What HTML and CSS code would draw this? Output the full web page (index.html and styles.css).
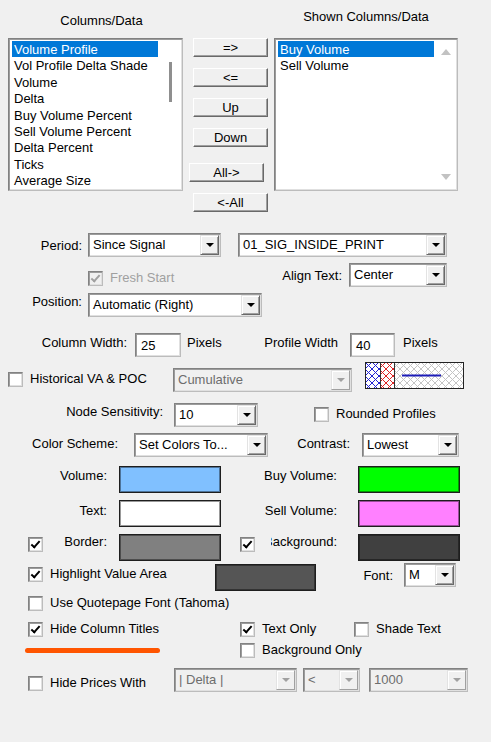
FILE: index.html
```html
<!DOCTYPE html>
<html lang="en">
<head>
  <meta charset="UTF-8" />
  <title>Volume Profile - Column Settings</title>
  <link rel="stylesheet" href="styles.css">
</head>
<body>
  <div class="dlg">
    <!-- column pickers -->
    <div class="lists">
      <div class="pane pane-src">
        <div class="pane-title">Columns/Data</div>
        <div class="listbox">
          <ul class="items">
            <li class="sel">Volume Profile</li>
            <li>Vol Profile Delta Shade</li>
            <li>Volume</li>
            <li>Delta</li>
            <li>Buy Volume Percent</li>
            <li>Sell Volume Percent</li>
            <li>Delta Percent</li>
            <li>Ticks</li>
            <li>Average Size</li>
          </ul>
          <div class="vbar"><span class="thumb"></span></div>
        </div>
      </div>
      <div class="movers">
        <button class="btn">=&gt;</button>
        <button class="btn">&lt;=</button>
        <button class="btn">Up</button>
        <button class="btn">Down</button>
        <button class="btn all-in">All-&gt;</button>
        <button class="btn">&lt;-All</button>
      </div>
      <div class="pane pane-dst">
        <div class="pane-title">Shown Columns/Data</div>
        <div class="listbox">
          <ul class="items">
            <li class="sel">Buy Volume</li>
            <li>Sell Volume</li>
          </ul>
          <div class="vbar"><span class="arr up"></span><span class="arr down"></span></div>
        </div>
      </div>
    </div>

    <div class="row period">
      <span class="lab r period-lab">Period:</span>
      <div class="combo period-box"><span class="val">Since Signal</span><span class="drop"></span></div>
      <div class="combo signal-box"><span class="val">01_SIG_INSIDE_PRINT</span><span class="drop"></span></div>
    </div>

    <div class="row align">
      <label class="check off fresh-chk"><span class="chk on"></span>Fresh Start</label>
      <span class="lab r align-lab">Align Text:</span>
      <div class="combo align-box"><span class="val">Center</span><span class="drop"></span></div>
    </div>

    <div class="row position">
      <span class="lab r pos-lab">Position:</span>
      <div class="combo pos-box"><span class="val">Automatic (Right)</span><span class="drop"></span></div>
    </div>

    <div class="row widths">
      <span class="lab r colw-lab">Column Width:</span>
      <span class="edit colw-box">25</span>
      <span class="lab colw-unit">Pixels</span>
      <span class="lab r profw-lab">Profile Width</span>
      <span class="edit profw-box">40</span>
      <span class="lab">Pixels</span>
    </div>

    <div class="row hist">
      <label class="check hist-chk"><span class="chk"></span>Historical VA &amp; POC</label>
      <div class="combo off cum-box"><span class="val">Cumulative</span><span class="drop"></span></div>
      <svg class="hatch" width="99" height="27" viewBox="0 0 99 27">
        <defs>
          <pattern id="hatch-blue" width="7" height="7" patternUnits="userSpaceOnUse">
            <path d="M0 0L7 7M7 0L0 7" stroke="#2424d4" stroke-width="1" />
          </pattern>
          <pattern id="hatch-red" width="7" height="7" patternUnits="userSpaceOnUse">
            <path d="M0 0L7 7M7 0L0 7" stroke="#e02424" stroke-width="1" />
          </pattern>
          <pattern id="hatch-grey" width="7" height="7" patternUnits="userSpaceOnUse">
            <path d="M0 0L7 7M7 0L0 7" stroke="#c4c4c4" stroke-width="1" />
          </pattern>
        </defs>
        <rect width="99" height="27" fill="#fff" />
        <rect x="1" y="1" width="15" height="25" fill="url(#hatch-blue)" />
        <rect x="16" y="1" width="13" height="25" fill="url(#hatch-red)" />
        <rect x="29" y="1" width="69" height="25" fill="url(#hatch-grey)" />
        <path d="M15.5 1V26M29.5 1V26" stroke="#333" />
        <path d="M37 13.5H76" stroke="#1c1cb8" stroke-width="2" />
        <rect x="0.5" y="0.5" width="98" height="26" fill="none" stroke="#222" />
      </svg>
    </div>

    <div class="row node">
      <span class="lab r node-lab">Node Sensitivity:</span>
      <div class="combo node-box"><span class="val">10</span><span class="drop"></span></div>
      <label class="check round-chk"><span class="chk"></span>Rounded Profiles</label>
    </div>

    <div class="row scheme">
      <span class="lab r scheme-lab">Color Scheme:</span>
      <div class="combo scheme-box"><span class="val">Set Colors To...</span><span class="drop"></span></div>
      <span class="lab r contrast-lab">Contrast:</span>
      <div class="combo contrast-box"><span class="val">Lowest</span><span class="drop"></span></div>
    </div>

    <!-- colour swatches -->
    <div class="row swatches">
      <span class="lab r left-lab">Volume:</span>
      <span class="swatch c-volume"></span>
      <span class="lab r right-lab">Buy Volume:</span>
      <span class="swatch c-buy"></span>
    </div>

    <div class="row swatches text-row">
      <span class="lab r left-lab">Text:</span>
      <span class="swatch c-text"></span>
      <span class="lab r right-lab">Sell Volume:</span>
      <span class="swatch c-sell"></span>
    </div>

    <div class="row swatches border-row">
      <span class="chk on border-chk"></span>
      <span class="lab r border-lab">Border:</span>
      <span class="swatch c-border"></span>
      <span class="chk on bg-chk"></span>
      <span class="lab bg-lab">Background:</span>
      <span class="swatch c-back"></span>
    </div>

    <div class="row highlight">
      <label class="check hl-chk"><span class="chk on"></span>Highlight Value Area</label>
      <span class="swatch c-highlight"></span>
      <span class="lab r font-lab">Font:</span>
      <div class="combo font-box"><span class="val">M</span><span class="drop"></span></div>
    </div>

    <div class="row quote">
      <label class="check"><span class="chk"></span>Use Quotepage Font (Tahoma)</label>
    </div>

    <div class="row titles">
      <label class="check titles-chk"><span class="chk on"></span>Hide Column Titles</label>
      <label class="check textonly-chk"><span class="chk on"></span>Text Only</label>
      <label class="check"><span class="chk"></span>Shade Text</label>
    </div>

    <div class="row bgonly">
      <span class="mark"></span>
      <label class="check bgonly-chk"><span class="chk"></span>Background Only</label>
    </div>

    <div class="row prices">
      <label class="check prices-chk"><span class="chk"></span>Hide Prices With</label>
      <div class="combo off delta-box"><span class="val">| Delta |</span><span class="drop"></span></div>
      <div class="combo off op-box"><span class="val">&lt;</span><span class="drop"></span></div>
      <div class="combo off qty-box"><span class="val">1000</span><span class="drop"></span></div>
    </div>
  </div>
</body>
</html>
```

FILE: styles.css
```css
body {
  margin: 0;
  background: #f0f0f0;
  color: #000;
  font-family: "Liberation Sans", Arial, sans-serif;
  font-size: 13px;
}
.dlg {
  width: 491px;
  height: 742px;
  overflow: hidden;
}

/* sunken frame shared by lists, combos, edits, checkboxes */
.listbox,
.combo,
.edit,
.chk {
  box-sizing: border-box;
  border: 1px solid;
  border-color: #828282 #bcbcbc #bcbcbc #828282;
  box-shadow: inset 1px 1px #9c9c9c, inset -1px -1px #e0e0e0;
  background: #fff;
}

/* ---- list pickers ---- */
.lists {
  display: flex;
  height: 213px;
}
.pane {
  display: flex;
  flex-direction: column;
}
.pane-src {
  margin-left: 8px;
  width: 175px;
}
.pane-dst {
  margin-left: 6px;
  width: 184px;
}
.pane-title {
  height: 38px;
  box-sizing: border-box;
  line-height: 16px;
  text-align: center;
}
.pane-src .pane-title {
  padding: 13px 0 0 12px;
}
.pane-dst .pane-title {
  padding-top: 9px;
}
.listbox {
  height: 153px;
  display: flex;
  padding: 2px 0 0 3px;
}
.items {
  list-style: none;
  margin: 0;
  padding: 0;
  width: 146px;
  flex-shrink: 0;
}
.pane-dst .items {
  width: 156px;
}
.items li {
  height: 16.4px;
  line-height: 17px;
  padding-left: 2px;
  white-space: nowrap;
}
.items li.sel {
  background: #0078d7;
  color: #fff;
}
.vbar {
  flex: 1;
  display: flex;
  flex-direction: column;
  align-items: center;
}
.thumb {
  width: 3px;
  height: 40px;
  margin-top: 21px;
  background: #8f8f8f;
}
.arr {
  width: 0;
  height: 0;
  border-left: 5px solid transparent;
  border-right: 5px solid transparent;
}
.arr.up {
  margin-top: 8px;
  border-bottom: 6px solid #c2c2c2;
}
.arr.down {
  margin: auto 0 10px;
  border-top: 6px solid #c2c2c2;
}

.movers {
  display: flex;
  flex-direction: column;
  align-items: flex-start;
  margin-left: 6px;
  width: 79px;
  padding-top: 38px;
  box-sizing: border-box;
}
.btn {
  width: 75px;
  height: 19px;
  margin: 11px 0 0 4px;
  padding: 0;
  font: inherit;
  line-height: 15px;
  color: #000;
  background: #f0f0f0;
  border: 1px solid;
  border-color: #fff #696969 #696969 #fff;
  box-shadow: inset -1px -1px #a0a0a0;
}
.btn:first-child {
  margin-top: 0;
}
.btn.all-in {
  margin: 16px 0 0 0;
}

/* ---- form rows ---- */
.row {
  display: flex;
  align-items: flex-start;
}
.row > * {
  flex-shrink: 0;
}
.lab {
  line-height: 16px;
  white-space: nowrap;
}
.lab.r {
  text-align: right;
}

.check {
  display: flex;
  align-items: center;
  gap: 7px;
  line-height: 16px;
  white-space: nowrap;
}
.chk {
  position: relative;
  width: 15px;
  height: 15px;
}
.chk.on::after {
  content: "";
  position: absolute;
  left: 4px;
  top: 1px;
  width: 3px;
  height: 7px;
  border: solid #000;
  border-width: 0 2.5px 2.5px 0;
  transform: rotate(42deg);
}
.check.off {
  color: #a0a0a0;
}
.check.off .chk {
  background: #f0f0f0;
}
.check.off .chk.on::after {
  border-color: #a0a0a0;
}

.combo {
  display: flex;
  height: 24px;
  padding: 1px;
}
.combo .val {
  flex: 1;
  padding-left: 3px;
  line-height: 20px;
  white-space: nowrap;
  overflow: hidden;
}
.combo .drop {
  width: 19px;
  box-sizing: border-box;
  display: flex;
  align-items: center;
  justify-content: center;
  background: #f0f0f0;
  border: 1px solid;
  border-color: #e3e3e3 #696969 #696969 #e3e3e3;
  box-shadow: inset 1px 1px #fff, inset -1px -1px #a0a0a0;
}
.combo .drop::after {
  content: "";
  border-left: 4px solid transparent;
  border-right: 4px solid transparent;
  border-top: 4px solid #000;
}
.combo.off {
  background: #f0f0f0;
  color: #6d6d6d;
}
.combo.off .drop {
  border-color: #e3e3e3 #a0a0a0 #a0a0a0 #e3e3e3;
  box-shadow: inset 1px 1px #fff;
}
.combo.off .drop::after {
  border-top-color: #a0a0a0;
}

.edit {
  height: 24px;
  padding: 1px 0 0 5px;
  line-height: 21px;
}

.swatch {
  box-sizing: border-box;
  width: 102px;
  height: 27px;
  border: 1px solid #1e1e1e;
  box-shadow: inset 0 0 0 1px rgba(0, 0, 0, 0.4);
}
.c-volume { background: #80c0ff; }
.c-buy { background: #00ff00; }
.c-text { background: #fff; }
.c-sell { background: #ff80ff; }
.c-border { background: #808080; }
.c-back { background: #404040; }
.c-highlight { background: #555; }

/* period / signal */
.period {
  margin-top: 20px;
  height: 24px;
}
.period-lab {
  width: 82px;
  margin-top: 5px;
}
.period-box {
  margin-left: 6px;
  width: 133px;
}
.signal-box {
  margin-left: 17px;
  width: 209px;
}

.align {
  margin-top: 6px;
  height: 24px;
}
.fresh-chk {
  margin: 7px 0 0 88px;
}
.align-lab {
  margin: 5px 7px 0 auto;
}
.align-box {
  width: 98px;
  margin-right: 44px;
}

.position {
  margin-top: 6px;
  height: 24px;
}
.pos-lab {
  width: 82px;
  margin-top: 1px;
}
.pos-box {
  margin-left: 6px;
  width: 174px;
}

.widths {
  margin-top: 16px;
  height: 24px;
}
.widths .lab {
  margin-top: 2px;
}
.colw-lab {
  width: 127px;
}
.colw-box {
  margin-left: 8px;
  width: 46px;
}
.colw-unit {
  margin-left: 6px;
  width: 54px;
}
.profw-lab {
  width: 97px;
}
.profw-box {
  margin: 0 8px 0 12px;
  width: 45px;
}

.hist {
  margin-top: 4px;
  height: 31px;
}
.hist-chk {
  margin: 10px 0 0 8px;
  width: 165px;
}
.cum-box {
  margin-top: 7px;
  width: 179px;
}
.hatch {
  display: block;
  margin: 1px 0 0 13px;
}

.node {
  margin-top: 11px;
  height: 24px;
}
.node-lab {
  width: 163px;
  margin-top: 1px;
}
.node-box {
  margin-left: 11px;
  width: 84px;
}
.round-chk {
  margin: 3px 0 0 56px;
}

.scheme {
  margin-top: 6px;
  height: 24px;
}
.scheme .lab {
  margin-top: 3px;
}
.scheme-lab {
  width: 118px;
}
.scheme-box {
  margin-left: 16px;
  width: 134px;
}
.contrast-lab {
  width: 82px;
}
.contrast-box {
  margin-left: 12px;
  width: 97px;
}

.swatches {
  margin-top: 9px;
  height: 27px;
}
.swatches .lab {
  margin-top: 2px;
}
.left-lab {
  width: 107px;
}
.swatches .swatch {
  margin-left: 12px;
}
.right-lab {
  width: 116px;
}
.swatches .right-lab + .swatch {
  margin-left: 21px;
}
.text-row {
  margin-top: 7px;
}
.text-row .lab {
  margin-top: 3px;
}
.border-row {
  margin-top: 7px;
}
.border-row .lab {
  margin-top: 0;
}
.border-chk {
  margin: 3px 0 0 28px;
}
.border-lab {
  width: 64px;
}
.bg-chk {
  margin: 3px 0 0 19px;
}
.bg-lab {
  display: flex;
  justify-content: flex-end;
  overflow: hidden;
  width: 66px;
  margin-left: 16px;
}
.border-row .bg-lab + .swatch {
  margin-left: 21px;
}

.highlight {
  margin-top: 2px;
  height: 28px;
}
.hl-chk {
  margin: 3px 0 0 28px;
  width: 187px;
}
.c-highlight {
  width: 101px;
  margin-top: 1px;
}
.font-lab {
  width: 77px;
  margin-top: 5px;
}
.font-box {
  margin-left: 11px;
  width: 52px;
}

.quote {
  margin: 4px 0 0 28px;
  height: 15px;
}

.titles {
  margin-top: 11px;
  height: 15px;
}
.titles-chk {
  margin-left: 28px;
  width: 212px;
}
.textonly-chk {
  width: 114px;
}

.bgonly {
  margin-top: 6px;
  height: 15px;
}
.mark {
  margin: 6px 0 0 25px;
  width: 135px;
  height: 5px;
  border-radius: 3px;
  background: #ff5500;
}
.bgonly-chk {
  margin-left: 80px;
}

.prices {
  margin-top: 11px;
  height: 24px;
}
.prices-chk {
  margin: 7px 0 0 28px;
  width: 146px;
}
.delta-box {
  width: 123px;
}
.op-box {
  margin-left: 6px;
  width: 57px;
}
.qty-box {
  margin-left: 9px;
  width: 99px;
}
```
